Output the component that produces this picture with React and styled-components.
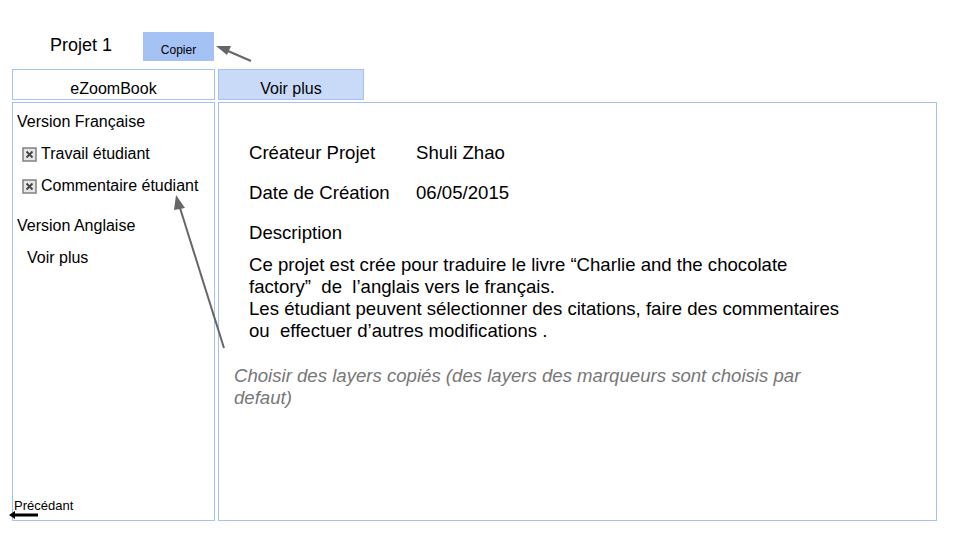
import React from 'react'
import styled, { createGlobalStyle } from 'styled-components'

const GlobalStyle = createGlobalStyle`
  html, body {
    margin: 0;
    padding: 0;
    background: #fff;
    font-family: "Liberation Sans", Arial, sans-serif;
    color: #000;
  }
`

const Page = styled.div`
  position: relative;
  width: 960px;
  height: 540px;
  overflow: hidden;
`

const TopBar = styled.div`
  display: flex;
  align-items: flex-start;
  padding: 32px 0 0 50px;
  height: 37px;
`

const Title = styled.h1`
  margin: 2px 0 0;
  font-size: 18px;
  font-weight: normal;
  line-height: 22px;
  width: 93px;
`

const CopyButton = styled.button`
  width: 71px;
  height: 29px;
  padding: 6px 0 0;
  border: 0;
  background: #a4c2f4;
  font-family: inherit;
  font-size: 12px;
  color: #000;
`

const Columns = styled.div`
  display: flex;
  gap: 3px;
  padding-left: 12px;
`

const Column = styled.div`
  display: flex;
  flex-direction: column;
  gap: 2px;
  width: ${p => p.width}px;
`

const Tab = styled.div`
  box-sizing: border-box;
  height: 31px;
  width: ${p => p.width || '100%'};
  border: 1px solid #a4c2f4;
  background: ${p => (p.filled ? '#c9daf8' : '#fff')};
  font-size: 16px;
  text-align: center;
  padding-top: 10px;
  line-height: 18px;
`

const Panel = styled.div`
  box-sizing: border-box;
  height: 419px;
  border: 1px solid #a4c2f4;
  display: flex;
  flex-direction: column;
  padding: ${p => p.pad};
`

const SideHeading = styled.div`
  font-size: 16px;
  line-height: 18px;
  height: 32px;
  padding-left: ${p => p.indent || 0}px;
`

const CheckRow = styled.label`
  display: flex;
  align-items: flex-start;
  gap: 4px;
  font-size: 16px;
  line-height: 18px;
  height: 32px;
  padding-left: 5px;

  svg {
    margin-top: 2px;
    flex: none;
  }
`

const Back = styled.div`
  margin: auto 0 7px -3px;
  font-size: 13px;
  line-height: 14px;
`

const InfoRow = styled.div`
  display: flex;
  font-size: 18.6px;
  line-height: 20px;
  height: ${p => p.h || 40}px;
`

const InfoLabel = styled.span`
  width: 167px;
`

const Paragraph = styled.p`
  margin: 0;
  font-size: 18.6px;
  line-height: 22px;
  white-space: nowrap;
`

const Note = styled.p`
  margin: 23px 0 0 -15px;
  font-size: 18.6px;
  line-height: 22px;
  font-style: italic;
  color: #777;
  white-space: nowrap;
`

const Overlay = styled.svg`
  position: absolute;
  left: 0;
  top: 0;
  pointer-events: none;
`

const CheckIcon = () => (
  <svg width="15" height="15" viewBox="0 0 15 15">
    <rect x="1" y="1" width="13" height="13" fill="#e6e6e6" stroke="#808080" strokeWidth="1.5" />
    <path d="M4.5 4.5 L10.5 10.5 M10.5 4.5 L4.5 10.5" stroke="#444" strokeWidth="1.8" />
  </svg>
)

const App = () => {
  return (
    <Page>
      <GlobalStyle />
      <TopBar>
        <Title>Projet 1</Title>
        <CopyButton>Copier</CopyButton>
      </TopBar>
      <Columns>
        <Column width={203}>
          <Tab>eZoomBook</Tab>
          <Panel pad="10px 0 0 4px">
            <SideHeading>Version Française</SideHeading>
            <CheckRow><CheckIcon />Travail étudiant</CheckRow>
            <CheckRow><CheckIcon />Commentaire étudiant</CheckRow>
            <SideHeading style={{ marginTop: 8 }}>Version Anglaise</SideHeading>
            <SideHeading indent={10}>Voir plus</SideHeading>
            <Back>Précédant</Back>
          </Panel>
        </Column>
        <Column width={719}>
          <Tab filled width="146px">Voir plus</Tab>
          <Panel pad="40px 0 0 30px">
            <InfoRow><InfoLabel>Créateur Projet</InfoLabel>Shuli Zhao</InfoRow>
            <InfoRow><InfoLabel>Date de Création</InfoLabel>06/05/2015</InfoRow>
            <InfoRow h={31}>Description</InfoRow>
            <Paragraph>
              Ce projet est crée pour traduire le livre “Charlie and the chocolate
              <br />
              factory”&nbsp; de&nbsp; l’anglais vers le français.
              <br />
              Les étudiant peuvent sélectionner des citations, faire des commentaires
              <br />
              ou&nbsp; effectuer d’autres modifications .
            </Paragraph>
            <Note>
              Choisir des layers copiés (des layers des marqueurs sont choisis par
              <br />
              defaut)
            </Note>
          </Panel>
        </Column>
      </Columns>
      <Overlay width="960" height="540">
        <line x1="251" y1="61" x2="228" y2="51" stroke="#666" strokeWidth="2" />
        <polygon points="216,46 231,46 227,55" fill="#666" />
        <line x1="224" y1="348" x2="180" y2="208" stroke="#666" strokeWidth="2" />
        <polygon points="176,195 185,208 174,210" fill="#666" />
        <line x1="38" y1="515" x2="14" y2="515" stroke="#000" strokeWidth="3" />
        <polygon points="9,515 15,511 15,519" fill="#000" />
      </Overlay>
    </Page>
  )
}

export default App
